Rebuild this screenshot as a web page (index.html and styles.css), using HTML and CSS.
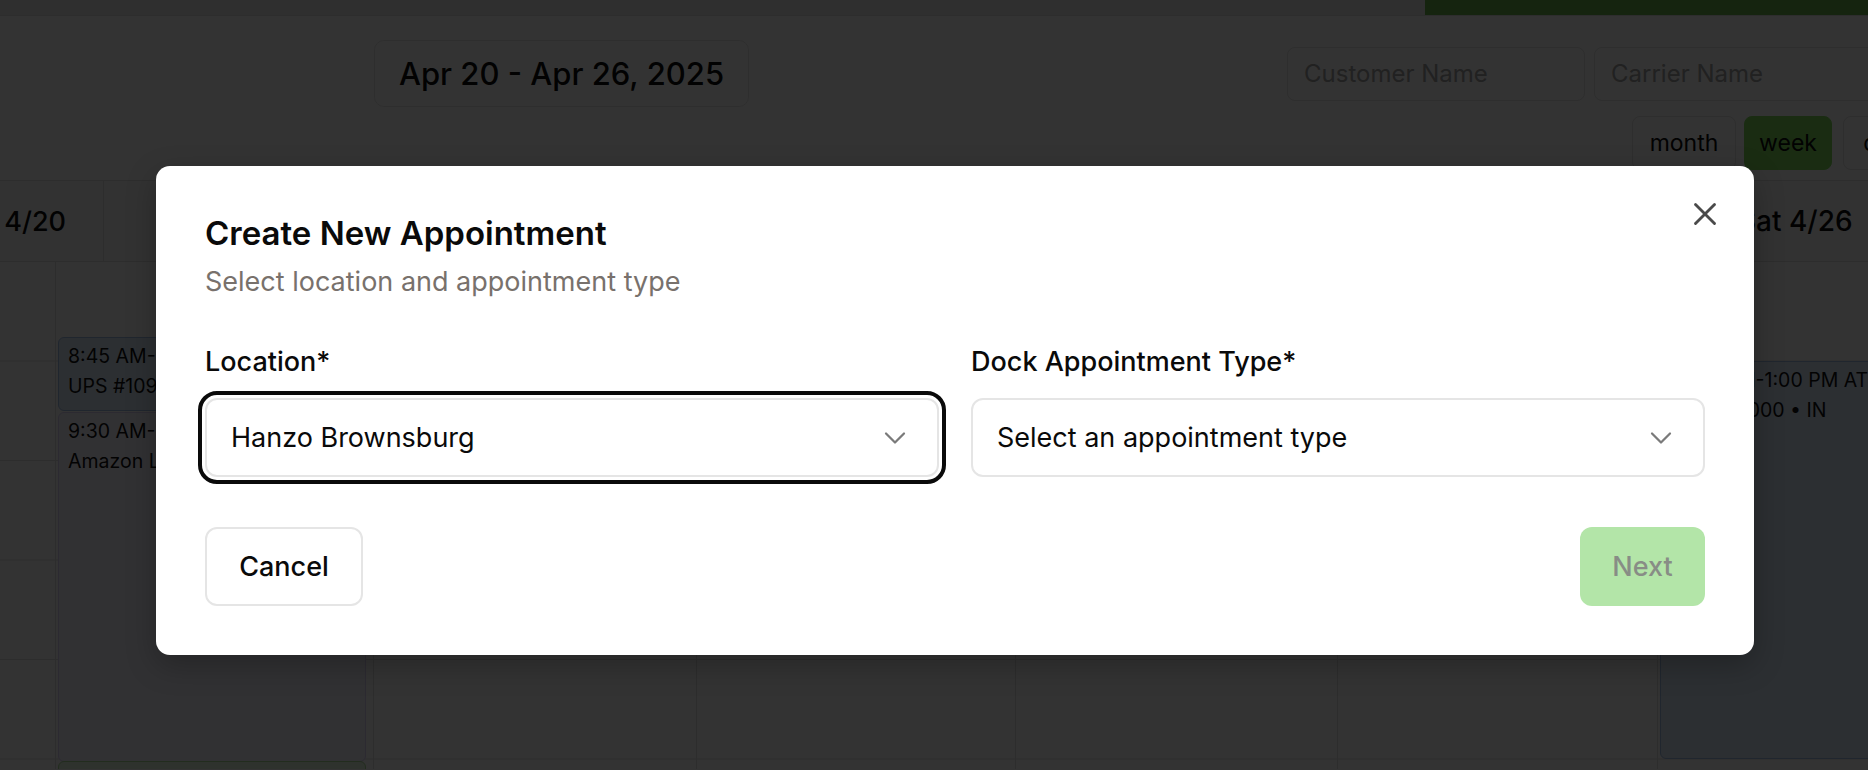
FILE: index.html
```html
<!DOCTYPE html>
<html lang="en">
<head>
<meta charset="utf-8">
<title>Create New Appointment</title>
<link rel="stylesheet" href="styles.css">
</head>
<body>
<div class="page">
  <div class="topbar"><div class="topbar-action"></div></div>
  <div class="toolbar">
    <div class="toolbar-row">
      <div class="date-range">Apr 20 - Apr 26, 2025</div>
      <div class="filters">
        <div class="filter-input">Customer Name</div>
        <div class="filter-input">Carrier Name</div>
      </div>
    </div>
    <div class="view-row">
      <div class="view-btn view-month">month</div>
      <div class="view-btn view-week active">week</div>
      <div class="view-btn view-day">day</div>
    </div>
  </div>
  <div class="calendar">
    <div class="cal-head">
      <div class="head-cell head-first">Sun 4/20</div>
      <div class="head-cell">Mon 4/21</div>
      <div class="head-cell">Tue 4/22</div>
      <div class="head-cell">Wed 4/23</div>
      <div class="head-cell">Thu 4/24</div>
      <div class="head-cell">Fri 4/25</div>
      <div class="head-cell head-last">Sat 4/26</div>
    </div>
    <div class="cal-body">
      <div class="gutter"></div>
      <div class="day-col">
        <div class="event ev-blue ev-a"><div>8:45 AM-9:30 AM</div><div>UPS #1093 • OUT</div></div>
        <div class="event ev-purple ev-b"><div>9:30 AM-11:30 AM</div><div>Amazon Logistics • IN</div></div>
        <div class="event ev-green ev-c"></div>
      </div>
      <div class="day-col"></div>
      <div class="day-col"></div>
      <div class="day-col"></div>
      <div class="day-col"></div>
      <div class="day-col">
        <div class="event ev-blue ev-d"><div>12:00 PM-1:00 PM ATL</div><div>PO #100000 • IN</div></div>
      </div>
    </div>
  </div>
</div>

<div class="overlay"></div>

<div class="modal" role="dialog" aria-labelledby="dlg-title">
  <button class="close-btn" aria-label="Close">
    <svg viewBox="0 0 24 24" width="38" height="38" fill="none" stroke="currentColor" stroke-width="1.8" stroke-linecap="round" stroke-linejoin="round"><path d="M18 6 6 18"/><path d="m6 6 12 12"/></svg>
  </button>
  <div class="modal-header">
    <h2 id="dlg-title" class="modal-title">Create New Appointment</h2>
    <p class="modal-desc">Select location and appointment type</p>
  </div>
  <div class="field-grid">
    <div class="field">
      <label class="field-label">Location*</label>
      <div class="select focused">
        <span class="select-value">Hanzo Brownsburg</span>
        <svg class="chevron" viewBox="0 0 24 24" width="36" height="36" fill="none" stroke="currentColor" stroke-width="1.5" stroke-linecap="round" stroke-linejoin="round"><path d="m6 9 6 6 6-6"/></svg>
      </div>
    </div>
    <div class="field">
      <label class="field-label">Dock Appointment Type*</label>
      <div class="select">
        <span class="select-value">Select an appointment type</span>
        <svg class="chevron" viewBox="0 0 24 24" width="36" height="36" fill="none" stroke="currentColor" stroke-width="1.5" stroke-linecap="round" stroke-linejoin="round"><path d="m6 9 6 6 6-6"/></svg>
      </div>
    </div>
  </div>
  <div class="modal-footer">
    <button class="btn btn-outline">Cancel</button>
    <button class="btn btn-primary" disabled>Next</button>
  </div>
</div>
</body>
</html>
```

FILE: styles.css
```css
* { box-sizing: border-box; }
html, body { margin: 0; padding: 0; }
body {
  width: 1868px;
  height: 770px;
  overflow: hidden;
  font-family: Inter, "Liberation Sans", Arial, sans-serif;
  background: #ffffff;
  color: #0a0a0a;
  position: relative;
}

/* ---------- background page ---------- */
.page {
  width: 1868px;
  height: 770px;
  overflow: hidden;
}

.topbar {
  height: 16px;
  background: #ebebeb;
  border-bottom: 1px solid #dedede;
  display: flex;
}
.topbar-action {
  margin-left: 1425px;
  flex: 1;
  background: #68b44c;
}

.toolbar { padding-top: 24px; }
.toolbar-row {
  display: flex;
  align-items: center;
  padding-left: 374px;
}
.date-range {
  width: 375px;
  height: 67px;
  flex: none;
  border: 1px solid #e6e6e6;
  border-radius: 10px;
  display: flex;
  align-items: center;
  justify-content: center;
  font-size: 31px;
  font-weight: 500;
  color: #0a0a0a;
}
.filters {
  display: flex;
  gap: 9px;
  margin-left: 538px;
  flex: none;
}
.filter-input {
  width: 298px;
  height: 54px;
  flex: none;
  border: 1px solid #e3e3e3;
  border-radius: 8px;
  padding-left: 16px;
  display: flex;
  align-items: center;
  font-size: 24px;
  color: #a3a3a3;
  white-space: nowrap;
}
.view-row {
  display: flex;
  gap: 8px;
  padding-left: 1632px;
  margin-top: 9px;
}
.view-btn {
  height: 54px;
  flex: none;
  border: 1px solid #e3e3e3;
  border-radius: 8px;
  display: flex;
  align-items: center;
  justify-content: center;
  font-size: 23px;
  color: #0a0a0a;
}
.view-month { width: 104px; }
.view-week { width: 88px; }
.view-day { width: 80px; margin-left: 3px; }
.view-btn.active { background: #80dd5c; border-color: #80dd5c; }

.calendar { margin-top: 10px; }
.cal-head {
  display: flex;
  height: 82px;
  border-top: 1px solid #e2e2e2;
  border-bottom: 1px solid #e2e2e2;
  background: #fbfbfb;
}
.head-cell {
  width: 322px;
  flex: none;
  border-right: 1px solid #e2e2e2;
  display: flex;
  align-items: center;
  justify-content: center;
  font-size: 27px;
  font-weight: 500;
  white-space: nowrap;
}
.head-first {
  width: 104px;
  justify-content: flex-end;
  padding-right: 37px;
}
.head-last {
  width: 400px;
  justify-content: flex-start;
  padding-left: 24px;
  font-size: 28px;
  border-right: none;
}

.cal-body {
  display: grid;
  grid-template-columns: 56px 318px 323px 319px 322px 320px 320px;
  height: 507px;
  background-image: linear-gradient(to bottom, transparent 98.5px, #e0e0e0 98.5px);
  background-size: 100% 99.5px;
}
.gutter { border-right: 1px solid #e2e2e2; }
.day-col {
  position: relative;
  border-right: 1px solid #e2e2e2;
  overflow: hidden;
}
.event {
  position: absolute;
  left: 2px;
  right: 7px;
  border: 1px solid;
  border-radius: 6px;
  padding: 3px 9px;
  font-size: 19.5px;
  line-height: 30px;
  white-space: nowrap;
  overflow: hidden;
  color: #111;
}
.ev-blue { background: #dce9fb; border-color: #9fbce6; }
.ev-purple { background: #f6f3ff; border-color: #d9d0f5; }
.ev-green { background: #e7f7e0; border-color: #a9dc97; }
.ev-a { top: 75px; height: 74px; }
.ev-b { top: 150px; height: 350px; }
.ev-c { top: 499px; height: 20px; }
.ev-d { top: 99px; height: 398px; right: -40px; }

/* ---------- overlay + dialog ---------- */
.overlay {
  position: absolute;
  inset: 0;
  background: rgba(0, 0, 0, 0.8);
}

.modal {
  position: absolute;
  left: 156px;
  top: 166px;
  width: 1598px;
  padding: 48px 49px 49px 49px;
  background: #ffffff;
  border-radius: 14px;
  box-shadow: 0 10px 30px rgba(0, 0, 0, 0.25);
  font-family: Inter, "Liberation Sans", Arial, sans-serif;
}
.close-btn {
  position: absolute;
  top: 29px;
  right: 30px;
  width: 38px;
  height: 38px;
  padding: 0;
  border: none;
  background: none;
  color: #4a4a4a;
  display: flex;
}
.modal-header {
  display: flex;
  flex-direction: column;
  gap: 12px;
}
.modal-title {
  margin: 0;
  font-size: 33px;
  line-height: 38px;
  font-weight: 600;
  letter-spacing: 0;
  color: #0a0a0a;
}
.modal-desc {
  margin: 0;
  font-size: 27px;
  line-height: 36px;
  color: #78716c;
}
.field-grid {
  display: grid;
  grid-template-columns: 1fr 1fr;
  gap: 32px;
  margin-top: 44px;
}
.field {
  display: flex;
  flex-direction: column;
  gap: 18px;
}
.field-label {
  font-size: 27px;
  line-height: 36px;
  font-weight: 500;
  color: #0a0a0a;
}
.select {
  height: 79px;
  border: 2px solid #e5e5e5;
  border-radius: 12px;
  padding: 0 24px;
  display: flex;
  align-items: center;
  justify-content: space-between;
  background: #fff;
}
.select.focused {
  outline: 4px solid #0a0a0a;
  outline-offset: 3px;
}
.select-value {
  font-size: 27px;
  color: #0a0a0a;
}
.chevron { color: #7a7a7a; flex: none; }

.modal-footer {
  display: flex;
  justify-content: space-between;
  margin-top: 50px;
}
.btn {
  height: 79px;
  border-radius: 12px;
  font-family: inherit;
  font-size: 27px;
  font-weight: 500;
  padding: 0;
}
.btn-outline {
  width: 158px;
  background: #fff;
  border: 2px solid #e5e5e5;
  color: #0a0a0a;
}
.btn-primary {
  width: 125px;
  background: #b3e5a8;
  border: none;
  color: #888d86;
}
```
